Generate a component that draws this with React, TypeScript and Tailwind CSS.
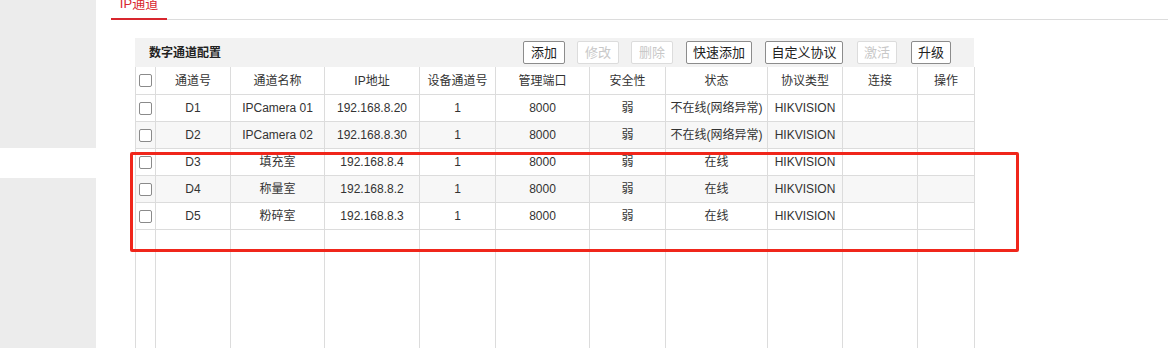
const cols = "grid grid-cols-[20px_75px_94px_95px_76px_94px_76px_102px_75px_75px_57px]";

const headers = ["通道号", "通道名称", "IP地址", "设备通道号", "管理端口", "安全性", "状态", "协议类型", "连接", "操作"];

const rows = [
  ["D1", "IPCamera 01", "192.168.8.20", "1", "8000", "弱", "不在线(网络异常)", "HIKVISION", "", ""],
  ["D2", "IPCamera 02", "192.168.8.30", "1", "8000", "弱", "不在线(网络异常)", "HIKVISION", "", ""],
  ["D3", "填充室", "192.168.8.4", "1", "8000", "弱", "在线", "HIKVISION", "", ""],
  ["D4", "称量室", "192.168.8.2", "1", "8000", "弱", "在线", "HIKVISION", "", ""],
  ["D5", "粉碎室", "192.168.8.3", "1", "8000", "弱", "在线", "HIKVISION", "", ""],
];

const buttons = [
  { label: "添加", w: "w-[42px]", disabled: false, ml: "" },
  { label: "修改", w: "w-[42px]", disabled: true, ml: "ml-[12px]" },
  { label: "删除", w: "w-[42px]", disabled: true, ml: "ml-[12px]" },
  { label: "快速添加", w: "w-[66px]", disabled: false, ml: "ml-[13px]" },
  { label: "自定义协议", w: "w-[78px]", disabled: false, ml: "ml-[13px]" },
  { label: "激活", w: "w-[40px]", disabled: true, ml: "ml-[14px]" },
  { label: "升级", w: "w-[40px]", disabled: false, ml: "ml-[14px]" },
];

function Checkbox() {
  return <div className="w-[13px] h-[13px] rounded-[2px] border border-[#8a8a8a] bg-white" />;
}

export default function App() {
  return (
    <div
      className="flex w-[1168px] h-[348px] overflow-hidden bg-white text-[#333] text-[12px]"
      style={{ fontFamily: '"Liberation Sans", Arial, "Noto Sans CJK SC", sans-serif' }}
    >
      {/* left nav blocks */}
      <div className="w-[96px] shrink-0 flex flex-col">
        <div className="h-[148px] bg-[#ececec]" />
        <div className="h-[30px] bg-white" />
        <div className="flex-1 bg-[#ececec]" />
      </div>

      <div className="flex-1 flex flex-col pl-[15px]">
        {/* tab bar */}
        <div className="h-[20px] border-b border-[#dcdcdc] flex items-end">
          <div className="w-[56px] h-[20px] border-b-2 border-[#d8262e] -mb-px flex justify-center">
            <span className="text-[#d8262e] text-[13px] leading-[13px] -mt-[3px]">IP通道</span>
          </div>
        </div>

        <div className="mt-[18px] ml-[24px] w-[839px] flex flex-col">
          {/* title bar */}
          <div className="h-[29px] bg-[#f2f2f2] flex items-center pl-[14px]">
            <span className="font-bold text-[12px] text-[#222]">数字通道配置</span>
            <div className="ml-auto flex items-center pr-[23px]">
              {buttons.map((b) => (
                <div
                  key={b.label}
                  className={`${b.w} ${b.ml} h-[23px] rounded-[2px] border bg-white flex items-center justify-center text-[13px] ${
                    b.disabled ? "border-[#dcdcdc] text-[#c8c8c8]" : "border-[#8c8c8c] text-[#222]"
                  }`}
                >
                  {b.label}
                </div>
              ))}
            </div>
          </div>

          {/* header row */}
          <div className={`${cols} h-[28px] border-l border-[#dcdcdc] bg-white`}>
            <div className="border-r border-b border-[#dcdcdc] flex items-center justify-center">
              <Checkbox />
            </div>
            {headers.map((h) => (
              <div key={h} className="border-r border-b border-[#dcdcdc] flex items-center justify-center">
                {h}
              </div>
            ))}
          </div>

          {rows.map((r, i) => (
            <div
              key={r[0]}
              className={`${cols} h-[27px] border-l border-[#dcdcdc] ${i % 2 === 1 ? "bg-[#f7f7f7]" : "bg-white"}`}
            >
              <div className="border-r border-b border-[#dcdcdc] flex items-center justify-center">
                <Checkbox />
              </div>
              {r.map((c, j) => (
                <div key={j} className="border-r border-b border-[#dcdcdc] flex items-center justify-center whitespace-nowrap">
                  {c}
                </div>
              ))}
            </div>
          ))}

          {/* filler with vertical lines only */}
          <div className={`${cols} h-[140px] border-l border-[#dcdcdc]`}>
            {Array.from({ length: 11 }).map((_, k) => (
              <div key={k} className="border-r border-[#dcdcdc]" />
            ))}
          </div>
        </div>
      </div>

      {/* red annotation box */}
      <div className="absolute left-[130px] top-[152px] w-[889px] h-[100px] border-[3px] border-[#f0261b] rounded-[2px] pointer-events-none" />
    </div>
  );
}
